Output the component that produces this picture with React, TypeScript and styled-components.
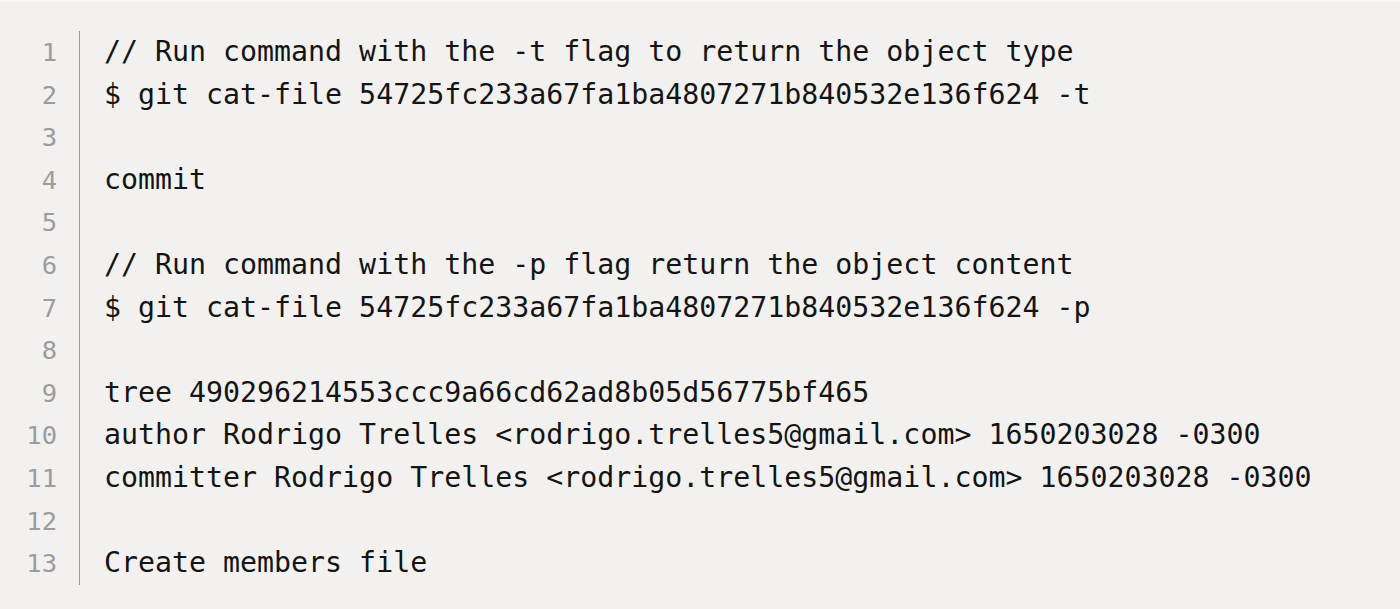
import React from "react";
import styled, { createGlobalStyle } from "styled-components";

const Global = createGlobalStyle`
  html, body {
    margin: 0;
    padding: 0;
    background: #f2f1f0;
  }
`;

const Page = styled.div`
  width: 1400px;
  height: 609px;
  box-sizing: border-box;
  background: #f2f1f0;
  border-top: 2px solid #f7f7f6;
  padding-top: 29px;
  overflow: hidden;
`;

const CodeBlock = styled.div`
  display: grid;
  grid-template-columns: 80px 1fr;
  line-height: 42.6px;
`;

const Gutter = styled.div`
  box-sizing: border-box;
  border-right: 1.5px solid #9a9a9a;
  padding-right: 22px;
  text-align: right;
  font-family: "DejaVu Sans Mono", monospace;
  font-size: 25.5px;
  color: #9c9c9c;
`;

const Code = styled.pre`
  margin: 0;
  padding-left: 24px;
  font-family: "DejaVu Sans Mono", monospace;
  font-size: 28.25px;
  line-height: 42.6px;
  color: #141414;
  white-space: pre;
`;

const Num = styled.div`
  height: 42.6px;
`;

const Line = styled.div`
  height: 42.6px;
`;

const lines = [
  "// Run command with the -t flag to return the object type",
  "$ git cat-file 54725fc233a67fa1ba4807271b840532e136f624 -t",
  "",
  "commit",
  "",
  "// Run command with the -p flag return the object content",
  "$ git cat-file 54725fc233a67fa1ba4807271b840532e136f624 -p",
  "",
  "tree 490296214553ccc9a66cd62ad8b05d56775bf465",
  "author Rodrigo Trelles <rodrigo.trelles5@gmail.com> 1650203028 -0300",
  "committer Rodrigo Trelles <rodrigo.trelles5@gmail.com> 1650203028 -0300",
  "",
  "Create members file",
];

export default function App() {
  return (
    <>
      <Global />
      <Page>
        <CodeBlock>
          <Gutter>
            {lines.map((_, i) => (
              <Num key={i}>{i + 1}</Num>
            ))}
          </Gutter>
          <Code>
            {lines.map((l, i) => (
              <Line key={i}>{l || " "}</Line>
            ))}
          </Code>
        </CodeBlock>
      </Page>
    </>
  );
}
